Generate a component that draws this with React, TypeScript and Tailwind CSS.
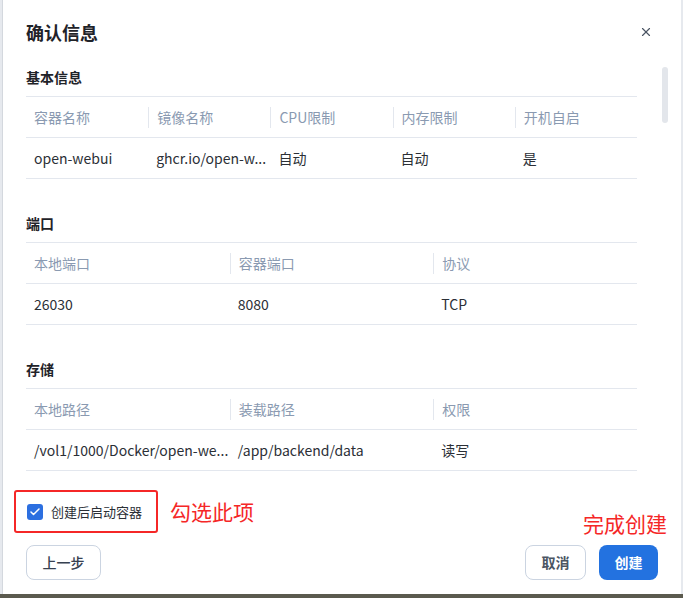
import { X, Check } from 'lucide-react';

type Table = { heads: string[]; rows: string[][] };

const sections: { title: string; table: Table }[] = [
  {
    title: '基本信息',
    table: {
      heads: ['容器名称', '镜像名称', 'CPU限制', '内存限制', '开机自启'],
      rows: [['open-webui', 'ghcr.io/open-w...', '自动', '自动', '是']],
    },
  },
  {
    title: '端口',
    table: {
      heads: ['本地端口', '容器端口', '协议'],
      rows: [['26030', '8080', 'TCP']],
    },
  },
  {
    title: '存储',
    table: {
      heads: ['本地路径', '装载路径', '权限'],
      rows: [['/vol1/1000/Docker/open-we...', '/app/backend/data', '读写']],
    },
  },
];

function InfoTable({ table }: { table: Table }) {
  return (
    <div className="border-t border-[#e3e7ee]">
      <div className="flex h-[41px] items-center border-b border-[#e3e7ee]">
        {table.heads.map((h, i) => (
          <div key={h} className="flex h-[21px] flex-1 min-w-0 items-center">
            {i > 0 && <div className="h-full w-px bg-[#e3e7ee]" />}
            <span className="whitespace-nowrap pl-2 text-[14px] text-[#8a9ab1]">{h}</span>
          </div>
        ))}
      </div>
      {table.rows.map((r, ri) => (
        <div key={ri} className="flex h-[41px] items-center border-b border-[#e3e7ee]">
          {r.map((c, i) => (
            <div key={i} className="flex-1 min-w-0 pl-2 pr-1">
              <div className="whitespace-nowrap text-[14px] text-[#2b2f36]">{c}</div>
            </div>
          ))}
        </div>
      ))}
    </div>
  );
}

export default function App() {
  return (
    <div
      className="h-[598px] w-[683px] overflow-hidden bg-[#5b5a4e]"
      style={{ fontFamily: '"Noto Sans CJK SC", "Noto Sans", sans-serif' }}
    >
      <div className="flex h-[594px] bg-[#e6e9ee]">
        <div className="relative ml-[2px] mr-[2px] flex h-full flex-1 flex-col border-l border-[#d4d8de] bg-white">
          {/* header */}
          <div className="flex h-[64px] items-center justify-between pl-[23px] pr-[28px]">
            <h1 className="text-[18px] font-bold text-[#1f2329]">确认信息</h1>
            <X className="size-[14px] text-[#4b5563]" strokeWidth={2} />
          </div>

          {/* scroll body */}
          <div className="relative h-[416px] overflow-hidden pl-[23px] pr-[44px]">
            <div className="absolute right-[13px] top-[3px] h-[56px] w-[6px] rounded-full bg-[#e3e6eb]" />
            {sections.map((s, i) => (
              <div key={s.title} className={i === 0 ? 'pt-[3px]' : 'pt-[34px]'}>
                <h2 className="mb-[9px] h-5 text-[14px] font-bold leading-5 text-[#1f2329]">{s.title}</h2>
                <InfoTable table={s.table} />
              </div>
            ))}
          </div>

          {/* checkbox row */}
          <div className="flex h-[63px] items-center pl-[11px]">
            <div className="flex h-[43px] w-[144px] items-center rounded-[3px] border-2 border-[#f52727] pl-[11px]">
              <span className="flex size-4 items-center justify-center rounded-[3px] bg-[#2c6fe0]">
                <Check className="size-3 text-white" strokeWidth={3} />
              </span>
              <span className="ml-2 text-[13px] text-[#2b2f36]">创建后启动容器</span>
            </div>
            <span className="ml-[12px] text-[21px] leading-none text-[#f52727]">勾选此项</span>
          </div>

          <span className="absolute right-[14px] top-[513px] text-[21px] leading-none text-[#f52727]">完成创建</span>

          {/* footer */}
          <div className="flex items-center justify-between pl-[23px] pr-[23px] pt-[2px]">
            <button className="h-[35px] w-[75px] rounded-lg border border-[#cbd4e1] text-[14px] font-medium text-[#374151]">
              上一步
            </button>
            <div className="flex gap-[13px]">
              <button className="h-[35px] w-[61px] rounded-lg border border-[#cbd4e1] text-[14px] font-bold text-[#4b5563]">
                取消
              </button>
              <button className="h-[35px] w-[59px] rounded-lg bg-[#2372e0] text-[14px] font-bold text-white">
                创建
              </button>
            </div>
          </div>
        </div>
      </div>
    </div>
  );
}
